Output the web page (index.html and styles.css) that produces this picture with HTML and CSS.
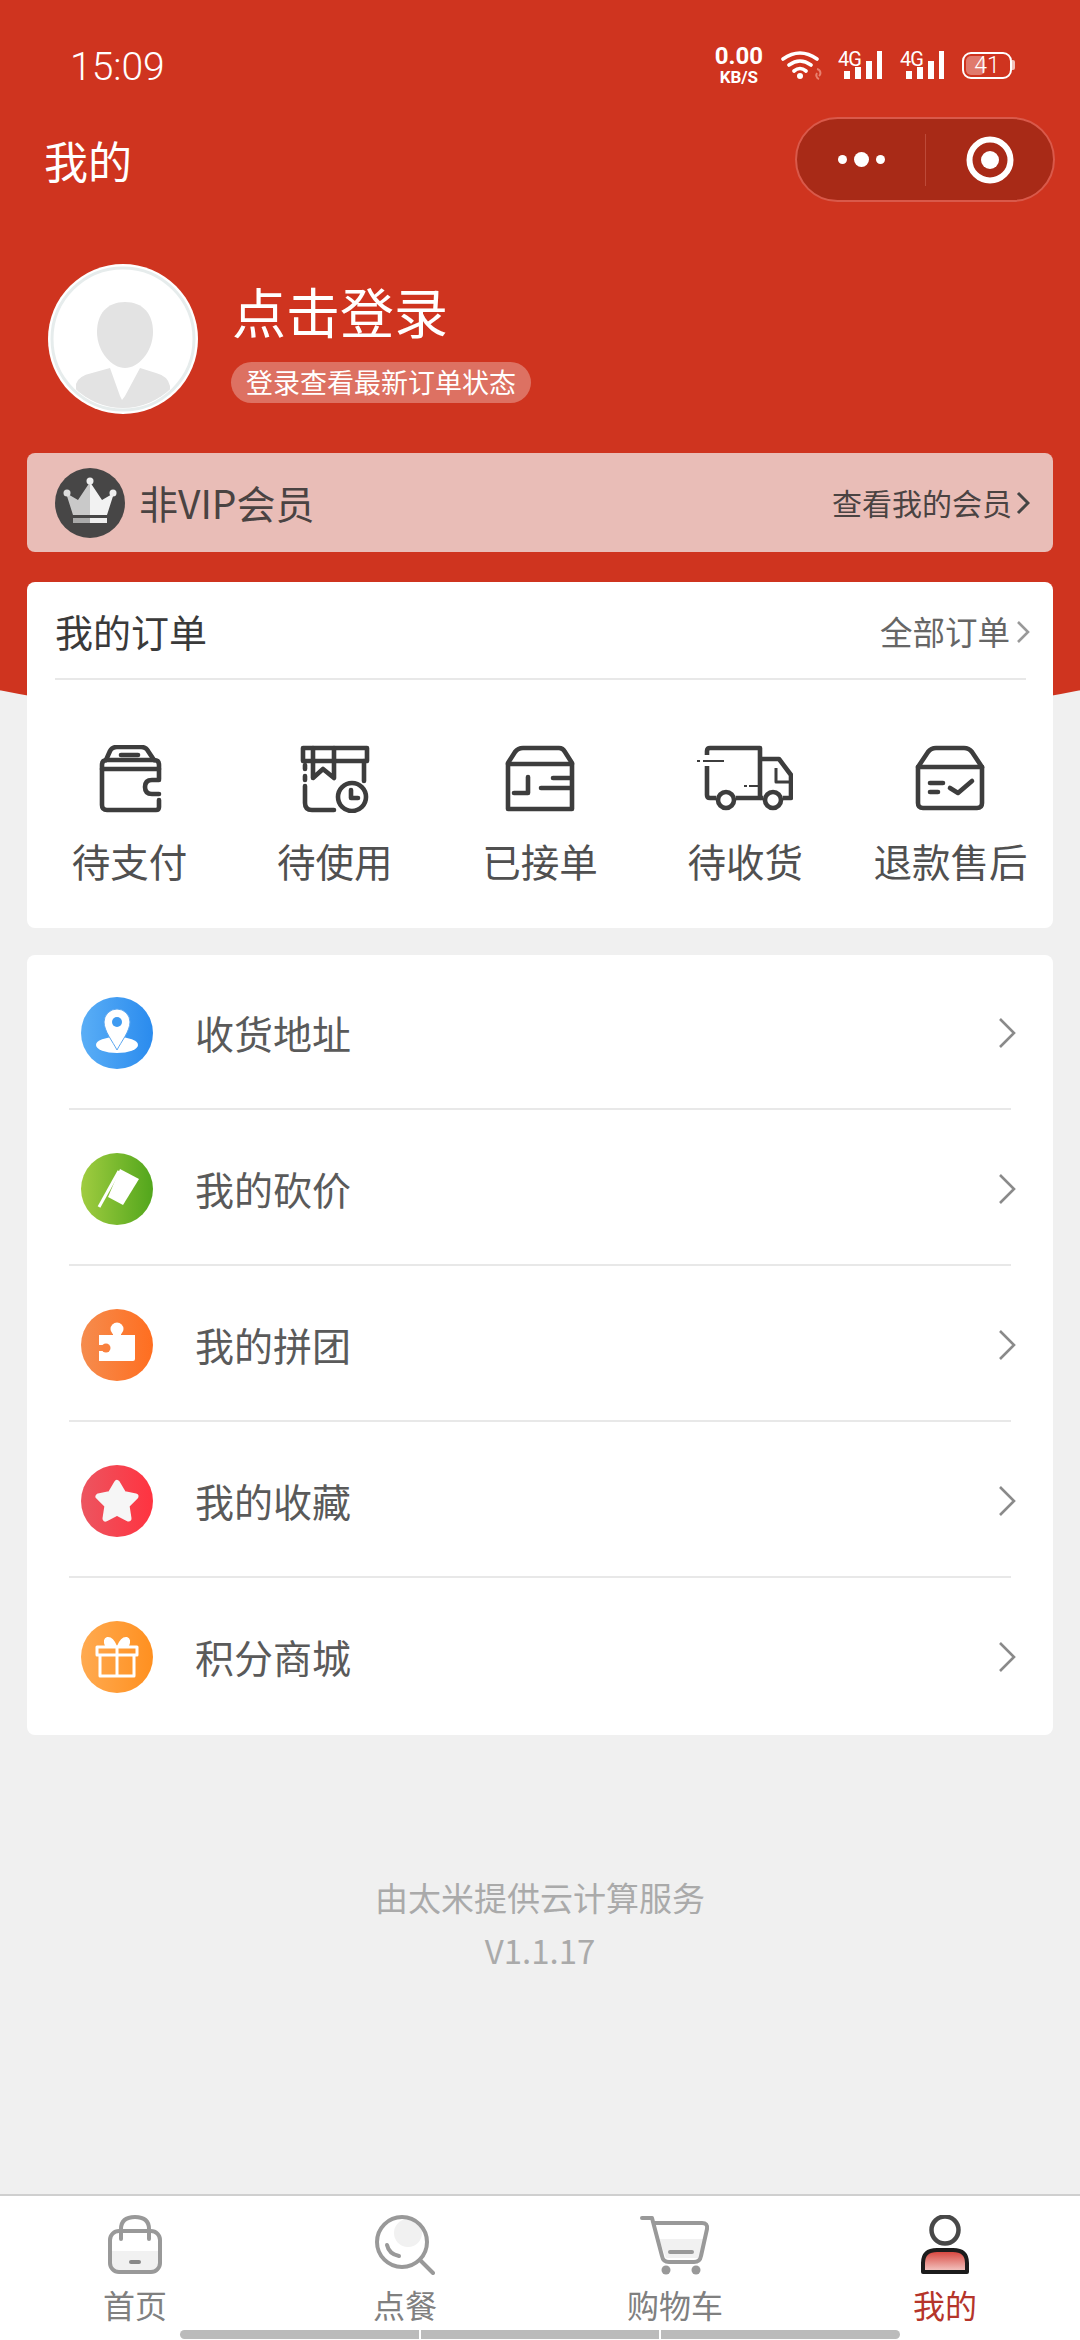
FILE: index.html
```html
<!DOCTYPE html>
<html lang="zh">
<head>
    <meta charset="UTF-8">
    <meta name="viewport" content="width=device-width, initial-scale=1.0">
    <title>我的</title>
    <link rel="stylesheet" href="styles.css">
</head>
<body>
<div class="page">
    <div class="hero">
        <div class="status">
            <span class="time">15:09</span>
            <div class="status-icons">
                <div class="speed"><b>0.00</b><b class="speed-unit">KB/S</b></div>
                <svg class="wifi" width="44" height="30" viewBox="0 0 44 30">
                    <path d="M2 9 Q19 -3 36 9 M8 15 Q19 7 30 15 M13 21 Q19 16 25 21" fill="none" stroke="#fff" stroke-width="3.6" stroke-linecap="round"/>
                    <circle cx="19" cy="26" r="3" fill="#fff"/>
                    <path d="M36 19 a4 4 0 0 1 2 7 M38 29 a4 4 0 0 1 -2 -6" fill="none" stroke="#e8806f" stroke-width="2"/>
                </svg>
                <div class="signal">
                    <span class="signal-label">4G</span>
                    <svg width="44" height="30" viewBox="0 0 44 30"><path d="M6 21h6v8H6zM17 17h6v12h-6zM28 11h6v18h-6zM39 1h5v28h-5z" fill="#fff"/></svg>
                </div>
                <div class="signal">
                    <span class="signal-label">4G</span>
                    <svg width="44" height="30" viewBox="0 0 44 30"><path d="M6 21h6v8H6zM17 17h6v12h-6zM28 11h6v18h-6zM39 1h5v28h-5z" fill="#fff"/></svg>
                </div>
                <div class="battery"><span class="battery-fill"></span><span class="battery-num">41</span></div>
            </div>
        </div>

        <div class="nav">
            <span class="nav-title">我的</span>
            <div class="capsule">
                <div class="capsule-side">
                    <span class="dot"></span><span class="dot dot-big"></span><span class="dot"></span>
                </div>
                <div class="capsule-side capsule-right">
                    <svg width="48" height="48" viewBox="0 0 48 48"><circle cx="24" cy="24" r="20.5" fill="none" stroke="#fff" stroke-width="6"/><circle cx="24" cy="24" r="9" fill="#fff"/></svg>
                </div>
            </div>
        </div>

        <div class="profile">
            <svg class="avatar" width="150" height="150" viewBox="0 0 150 150">
                <defs><clipPath id="avatar-clip"><circle cx="75" cy="75" r="69"/></clipPath></defs>
                <circle cx="75" cy="75" r="75" fill="#fff"/>
                <circle cx="75" cy="75" r="71" fill="#fff" stroke="#e6ecec" stroke-width="3"/>
                <g clip-path="url(#avatar-clip)" fill="#e3e3e3">
                    <path d="M77 38 C95 38 105 50 105 68 C105 88 90 104 77 104 C64 104 49 88 49 68 C49 50 59 38 77 38 Z"/>
                    <path d="M28 150 V120 Q30 112 44 109 L62 104 L72 132 L74 136 L77 132 L92 104 L108 109 Q120 112 122 122 V150 Z"/>
                </g>
            </svg>
            <div class="profile-text">
                <div class="login-title">点击登录</div>
                <div class="login-badge">登录查看最新订单状态</div>
            </div>
        </div>

        <div class="vip-bar">
            <svg width="70" height="70" viewBox="0 0 70 70">
                <circle cx="35" cy="35" r="35" fill="#474646"/>
                <path d="M18 47 L11 25 L23 32 L35 14 V47 Z" fill="#c9c9c9"/>
                <path d="M52 47 L59 25 L47 32 L35 14 V47 Z" fill="#f2f2f2"/>
                <circle cx="12" cy="25" r="3.5" fill="#ddd"/><circle cx="58" cy="25" r="3.5" fill="#eee"/><circle cx="35" cy="13" r="3.5" fill="#eee"/>
                <path d="M18 50h17v5H18z" fill="#aaa"/><path d="M35 50h17v5H35z" fill="#eee"/>
            </svg>
            <span class="vip-name">非VIP会员</span>
            <span class="vip-link">查看我的会员</span>
            <svg class="vip-arrow" width="14" height="26" viewBox="0 0 14 26"><path d="M2 3 L12 13 L2 23" fill="none" stroke="#444" stroke-width="3"/></svg>
        </div>
    </div>

    <div class="card orders">
        <div class="orders-head">
            <span class="orders-title">我的订单</span>
            <span class="orders-all">全部订单</span>
            <svg class="orders-arrow" width="14" height="26" viewBox="0 0 14 26"><path d="M2 3 L12 13 L2 23" fill="none" stroke="#999" stroke-width="2.6"/></svg>
        </div>
        <div class="orders-grid">
            <div class="order-item">
                <svg width="70" height="68" viewBox="0 0 70 68" fill="none" stroke="#3d3d3d" stroke-width="4.6" stroke-linecap="round" stroke-linejoin="round">
                    <path d="M11 15 L15 6 Q17 2 22 2 H46 Q51 2 53 6 L59 15"/>
                    <path d="M26 10 H43"/>
                    <path d="M64 34 V20 Q64 15 59 15 H12 Q7 15 7 20 V60 Q7 65 12 65 H61 Q64 65 64 62 V55"/>
                    <path d="M7 24 H64"/>
                    <path d="M64 35 H57 Q50 35 50 42 Q50 49 57 49 H64"/>
                </svg>
                <span>待支付</span>
            </div>
            <div class="order-item">
                <svg width="70" height="68" viewBox="0 0 70 68" fill="none" stroke="#3d3d3d" stroke-width="4.6" stroke-linecap="round" stroke-linejoin="round">
                    <path d="M3 3 H67 V16 H3 Z"/>
                    <path d="M13 3 V33 L23 24 L34 33 V3"/>
                    <path d="M5 20 V24 M5 31 V35 M5 41 V58 Q5 65 12 65 H34"/>
                    <path d="M64 16 V36"/>
                    <circle cx="52" cy="52" r="14"/>
                    <path d="M51 45 V53 H58"/>
                </svg>
                <span>待使用</span>
            </div>
            <div class="order-item">
                <svg width="70" height="68" viewBox="0 0 70 68" fill="none" stroke="#3d3d3d" stroke-width="4.6" stroke-linecap="round" stroke-linejoin="round">
                    <path d="M3 64 V18 L10 7 Q13 3 18 3 H54 Q58 3 60 7 L67 18 V64 Z"/>
                    <path d="M3 19 H67"/>
                    <path d="M23 32 V48 H9"/>
                    <path d="M48 33 H66 M36 43 H66"/>
                </svg>
                <span>已接单</span>
            </div>
            <div class="order-item">
                <svg width="96" height="68" viewBox="0 0 96 68" fill="none" stroke="#3d3d3d" stroke-width="4.6" stroke-linejoin="round">
                    <path d="M10 10 V6 Q10 3 13 3 H63 V53 H39 M19 53 H13 Q10 53 10 50 V21"/>
                    <path d="M63 14 H82 L94 30 V53 H86 M66 53 H63"/>
                    <path d="M79 23 V37 H94" stroke-width="3"/>
                    <circle cx="29" cy="55" r="8"/>
                    <circle cx="76" cy="55" r="8"/>
                    <path d="M0 16 H3 M6 16 H27 M47 41 H50 M52 41 H62" stroke-width="2"/>
                </svg>
                <span>待收货</span>
            </div>
            <div class="order-item">
                <svg width="70" height="68" viewBox="0 0 70 68" fill="none" stroke="#3d3d3d" stroke-width="4.6" stroke-linecap="round" stroke-linejoin="round">
                    <path d="M3 22 V58 Q3 63 8 63 H62 Q67 63 67 58 V22"/>
                    <path d="M3 22 L13 7 Q16 3 21 3 H49 Q54 3 57 7 L67 22 Z"/>
                    <path d="M15 38 H28 M15 47 H23"/>
                    <path d="M35 43 L43 48 L57 36"/>
                </svg>
                <span>退款售后</span>
            </div>
        </div>
    </div>

    <div class="card menu">
        <div class="menu-row">
            <svg class="menu-icon" width="72" height="72" viewBox="0 0 72 72">
                <defs><linearGradient id="grad-blue"><stop offset="0" stop-color="#5aaef6"/><stop offset="1" stop-color="#2a8bee"/></linearGradient></defs>
                <circle cx="36" cy="36" r="36" fill="url(#grad-blue)"/>
                <ellipse cx="36" cy="48" rx="21" ry="8" fill="#fff"/>
                <path d="M36 12 a13 13 0 0 1 13 13 c0 9 -9 20 -13 28 c-4 -8 -13 -19 -13 -28 a13 13 0 0 1 13 -13 z" fill="#fff" stroke="#5aa6f0" stroke-width="1"/>
                <circle cx="36" cy="25" r="5" fill="#3f9bf1"/>
            </svg>
            <span class="menu-text">收货地址</span>
            <svg class="menu-arrow" width="20" height="34" viewBox="0 0 20 34"><path d="M3 3 L17 17 L3 31" fill="none" stroke="#8a8a8a" stroke-width="2.6"/></svg>
        </div>
        <div class="menu-row">
            <svg class="menu-icon" width="72" height="72" viewBox="0 0 72 72">
                <defs><linearGradient id="grad-green"><stop offset="0" stop-color="#a0cc40"/><stop offset="1" stop-color="#52a61c"/></linearGradient></defs>
                <circle cx="36" cy="36" r="36" fill="url(#grad-green)"/>
                <path d="M39 16 L58 26 L42 52 L27 44 Z" fill="#fff"/>
                <path d="M38 18 L18 54" stroke="#fff" stroke-width="3"/>
            </svg>
            <span class="menu-text">我的砍价</span>
            <svg class="menu-arrow" width="20" height="34" viewBox="0 0 20 34"><path d="M3 3 L17 17 L3 31" fill="none" stroke="#8a8a8a" stroke-width="2.6"/></svg>
        </div>
        <div class="menu-row">
            <svg class="menu-icon" width="72" height="72" viewBox="0 0 72 72">
                <defs><linearGradient id="grad-orange"><stop offset="0" stop-color="#f58c4e"/><stop offset="1" stop-color="#ff6e20"/></linearGradient></defs>
                <circle cx="36" cy="36" r="36" fill="url(#grad-orange)"/>
                <path d="M18 26 H54 V50 Q54 52 52 52 H18 V42 H22 V36 H18 Z" fill="#fff"/>
                <circle cx="36" cy="20" r="6.5" fill="#fff"/>
                <path d="M32 22 H40 V28 H32 Z" fill="#fff"/>
                <circle cx="25" cy="39" r="4.5" fill="#f9803e"/>
            </svg>
            <span class="menu-text">我的拼团</span>
            <svg class="menu-arrow" width="20" height="34" viewBox="0 0 20 34"><path d="M3 3 L17 17 L3 31" fill="none" stroke="#8a8a8a" stroke-width="2.6"/></svg>
        </div>
        <div class="menu-row">
            <svg class="menu-icon" width="72" height="72" viewBox="0 0 72 72">
                <defs><linearGradient id="grad-red"><stop offset="0" stop-color="#ec5560"/><stop offset="1" stop-color="#ff3340"/></linearGradient></defs>
                <circle cx="36" cy="36" r="36" fill="url(#grad-red)"/>
                <path d="M36 18 L42.5 29 L54.5 31.5 L45.5 40.5 L47.5 53.5 L36 47.5 L24.5 53.5 L26.5 40.5 L17.5 31.5 L29.5 29 Z" fill="#f6f6f6" stroke="#f6f6f6" stroke-width="6" stroke-linejoin="round"/>
            </svg>
            <span class="menu-text">我的收藏</span>
            <svg class="menu-arrow" width="20" height="34" viewBox="0 0 20 34"><path d="M3 3 L17 17 L3 31" fill="none" stroke="#8a8a8a" stroke-width="2.6"/></svg>
        </div>
        <div class="menu-row">
            <svg class="menu-icon" width="72" height="72" viewBox="0 0 72 72">
                <defs><linearGradient id="grad-gold"><stop offset="0" stop-color="#ffaa50"/><stop offset="1" stop-color="#ff9020"/></linearGradient></defs>
                <circle cx="36" cy="36" r="36" fill="url(#grad-gold)"/>
                <path d="M36 25 Q32 15 26 16 Q21 18 24 25 Z M36 25 Q40 15 46 16 Q51 18 48 25 Z" fill="#fff"/>
                <path d="M16 26 H56 V34 H16 Z M19 34 V55 H53 V34 M36 26 V55" fill="none" stroke="#fff" stroke-width="3" stroke-linejoin="round"/>
            </svg>
            <span class="menu-text">积分商城</span>
            <svg class="menu-arrow" width="20" height="34" viewBox="0 0 20 34"><path d="M3 3 L17 17 L3 31" fill="none" stroke="#8a8a8a" stroke-width="2.6"/></svg>
        </div>
    </div>

    <div class="footer">
        <p>由太米提供云计算服务</p>
        <p>V1.1.17</p>
    </div>

    <div class="tabbar">
        <div class="tab">
            <svg width="60" height="60" viewBox="0 0 60 60" fill="none" stroke="#999" stroke-width="4" stroke-linecap="round">
                <path d="M6 36 H54 V47 Q54 55 46 55 H14 Q6 55 6 47 Z" fill="#f1f1f1" stroke="none"/>
                <rect x="5" y="16" width="50" height="41" rx="9"/>
                <path d="M16 24 V14 Q16 2 30 2 Q44 2 44 14 V24"/>
                <path d="M26 47 H34" stroke="#888"/>
            </svg>
            <span>首页</span>
        </div>
        <div class="tab">
            <svg width="60" height="60" viewBox="0 0 60 60" fill="none" stroke="#999" stroke-width="4" stroke-linecap="round">
                <circle cx="33" cy="18" r="14" fill="#f1f1f1" stroke="none"/>
                <circle cx="27" cy="27" r="25"/>
                <path d="M12 30 Q14 39 24 41"/>
                <path d="M45 45 L58 58"/>
            </svg>
            <span>点餐</span>
        </div>
        <div class="tab">
            <svg width="70" height="60" viewBox="0 0 70 60" fill="none" stroke="#999" stroke-width="4" stroke-linecap="round" stroke-linejoin="round">
                <path d="M19 24 H64 L60 43 H26 Z" fill="#f1f1f1" stroke="none"/>
                <path d="M2 3 H12 L22 41 Q23 47 29 47 H54 Q60 47 61 41 L67 14 Q68 8 62 8 H15"/>
                <path d="M30 37 H52"/>
                <circle cx="26" cy="55" r="4.5" fill="#999" stroke="none"/>
                <circle cx="56" cy="55" r="4.5" fill="#999" stroke="none"/>
            </svg>
            <span>购物车</span>
        </div>
        <div class="tab tab-active">
            <svg width="50" height="60" viewBox="0 0 50 60">
                <defs><linearGradient id="grad-user" x1="0" y1="0" x2="0" y2="1"><stop offset="0" stop-color="#d63c34"/><stop offset="1" stop-color="#f4cdc9"/></linearGradient></defs>
                <circle cx="25" cy="15" r="13.5" fill="none" stroke="#484848" stroke-width="4.5"/>
                <path d="M3 57 V48 Q3 35 17 35 H33 Q47 35 47 48 V57 Z" fill="url(#grad-user)" stroke="#1c1c1c" stroke-width="4" stroke-linejoin="round"/>
            </svg>
            <span>我的</span>
        </div>
        <div class="home-bar"><i></i><i></i><i></i></div>
    </div>
</div>
</body>
</html>
```

FILE: styles.css
```css
* {
    box-sizing: border-box;
}
body {
    margin: 0;
    font-family: "Noto Sans CJK SC", "Liberation Sans", sans-serif;
    background-color: #f0f0f0;
}
svg {
    display: block;
    flex-shrink: 0;
}
.page {
    width: 1080px;
    height: 2340px;
    display: flex;
    flex-direction: column;
    overflow: hidden;
}

/* red top block */
.hero {
    position: relative;
    height: 641px;
    background-color: #cf341f;
    color: white;
}
/* wide curved bottom edge, runs under the order card */
.hero::after {
    content: "";
    position: absolute;
    top: 100%;
    left: -108px;
    right: -108px;
    height: 89px;
    background-color: #cf341f;
    border-radius: 0 0 50% 50% / 0 0 100% 100%;
}
.status {
    height: 117px;
    padding: 47px 68px 0 70px;
    display: flex;
    justify-content: space-between;
    align-items: flex-start;
}
.time {
    font-family: Roboto, sans-serif;
    font-weight: 300;
    font-size: 39px;
    line-height: 40px;
}
.status-icons {
    margin-top: -3px;
    display: flex;
    align-items: center;
    gap: 18px;
}
.speed {
    display: flex;
    flex-direction: column;
    align-items: center;
    font-family: Roboto, sans-serif;
    font-size: 24px;
    line-height: 25px;
}
.speed-unit {
    font-size: 17px;
    line-height: 17px;
}
.wifi {
    margin-right: -5px;
}
.signal {
    position: relative;
    width: 44px;
    height: 30px;
}
.signal-label {
    position: absolute;
    left: 0;
    top: 0;
    font-family: Roboto, sans-serif;
    font-size: 20px;
    line-height: 18px;
    letter-spacing: -1px;
}
.battery {
    position: relative;
    width: 50px;
    height: 27px;
    border: 2.5px solid white;
    border-radius: 9px;
    display: flex;
    align-items: center;
    justify-content: center;
}
.battery::after {
    content: "";
    position: absolute;
    right: -5px;
    top: 6px;
    width: 3px;
    height: 10px;
    border-radius: 0 2px 2px 0;
    background-color: rgba(255, 255, 255, 0.7);
}
.battery-fill {
    position: absolute;
    left: 2px;
    top: 2px;
    bottom: 2px;
    width: 19px;
    border-radius: 5px;
    background-color: rgba(255, 255, 255, 0.35);
}
.battery-num {
    position: relative;
    font-family: Roboto, sans-serif;
    font-weight: 300;
    font-size: 23px;
    line-height: 23px;
}
.nav {
    height: 85px;
    padding: 0 25px 0 44px;
    display: flex;
    justify-content: space-between;
    align-items: center;
}
.nav-title {
    font-size: 44px;
}
.capsule {
    width: 260px;
    height: 85px;
    display: flex;
    align-items: center;
    background-color: #a82a17;
    border: 2px solid #d9594a;
    border-radius: 43px;
}
.capsule-side {
    width: 129px;
    height: 52px;
    display: flex;
    align-items: center;
    justify-content: center;
    gap: 7px;
}
.capsule-right {
    border-left: 1px solid #bd4a39;
}
.dot {
    width: 9px;
    height: 9px;
    border-radius: 50%;
    background-color: white;
}
.dot-big {
    width: 15px;
    height: 15px;
}
.profile {
    margin-top: 62px;
    padding-left: 48px;
    height: 150px;
    display: flex;
    gap: 33px;
}
.profile-text {
    padding-top: 15px;
    display: flex;
    flex-direction: column;
    align-items: flex-start;
}
.login-title {
    font-size: 54px;
    line-height: 64px;
    margin-left: 1px;
}
.login-badge {
    margin-top: 19px;
    height: 41px;
    padding: 0 15px;
    border-radius: 21px;
    font-size: 27px;
    line-height: 39px;
    background-color: rgba(255, 255, 255, 0.3);
}
.vip-bar {
    margin: 39px 27px 0;
    height: 99px;
    padding: 0 23px 0 28px;
    display: flex;
    align-items: center;
    background-color: #e9bdb7;
    border-radius: 8px;
    color: #4a4342;
}
.vip-name {
    margin-left: 14px;
    font-size: 39px;
    line-height: 50px;
    padding-bottom: 2px;
}
.vip-link {
    margin-left: auto;
    font-size: 30px;
    padding-bottom: 2px;
}
.vip-arrow {
    margin-left: 4px;
}

/* cards */
.card {
    position: relative;
    margin: 0 27px;
    background-color: white;
    border-radius: 8px;
}
.orders {
    height: 346px;
    margin-top: -59px;
}
.orders-head {
    height: 98px;
    margin: 0 27px 0 28px;
    display: flex;
    align-items: center;
    border-bottom: 2px solid #e8e8e8;
}
.orders-title {
    font-size: 38px;
    color: #3a3a3a;
}
.orders-all {
    margin-left: auto;
    font-size: 32.5px;
    color: #666;
}
.orders-arrow {
    margin: 4px -4px 0 6px;
}
.orders-grid {
    display: grid;
    grid-template-columns: repeat(5, 1fr);
    padding-top: 65px;
}
.order-item {
    display: flex;
    flex-direction: column;
    align-items: center;
    gap: 27px;
    font-size: 38.5px;
    line-height: 40px;
    color: #505050;
}
.menu {
    margin-top: 27px;
}
.menu-row {
    position: relative;
    height: 156px;
    padding: 0 36px 0 54px;
    display: flex;
    align-items: center;
    gap: 42px;
}
.menu-row:not(:last-child)::after {
    content: "";
    position: absolute;
    left: 42px;
    right: 42px;
    bottom: 1px;
    height: 2px;
    background-color: #e8e8e8;
}
.menu-text {
    font-size: 39px;
    line-height: 50px;
    padding-bottom: 2px;
    color: #5a5a5a;
}
.menu-arrow {
    margin-left: auto;
}
.footer {
    margin-top: 136px;
    text-align: center;
    font-size: 33px;
    line-height: 53px;
    color: #aaa;
}
.footer p {
    margin: 0;
}

/* bottom tabs */
.tabbar {
    position: relative;
    margin-top: auto;
    height: 146px;
    padding-top: 19px;
    display: grid;
    grid-template-columns: repeat(4, 1fr);
    background-color: white;
    border-top: 2px solid #cfcfcf;
}
.tab {
    display: flex;
    flex-direction: column;
    align-items: center;
    gap: 11px;
    font-size: 32px;
    line-height: 36px;
    color: #808080;
}
.tab-active {
    color: #b5352a;
}
.home-bar {
    position: absolute;
    left: 180px;
    bottom: 1px;
    width: 720px;
    height: 9px;
    display: flex;
    gap: 2px;
}
.home-bar i {
    flex: 1;
    background-color: #bbb;
}
.home-bar i:first-child {
    border-radius: 5px 0 0 5px;
}
.home-bar i:last-child {
    border-radius: 0 5px 5px 0;
}
```
